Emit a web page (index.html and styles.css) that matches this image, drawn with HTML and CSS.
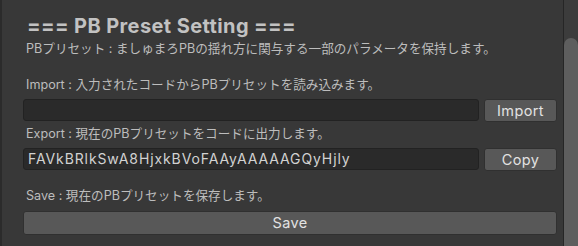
FILE: index.html
```html
<!DOCTYPE html>
<html lang="ja">
<head>
<meta charset="utf-8">
<link rel="stylesheet" href="styles.css">
</head>
<body>
<div class="window">
  <div class="edge"></div>
  <div class="content">
    <div class="title">=== PB Preset Setting ===</div>
    <div class="desc">PBプリセット : ましゅまろPBの揺れ方に関与する一部のパラメータを保持します。</div>
    <div class="label l-import">Import : 入力されたコードからPBプリセットを読み込みます。</div>
    <div class="row">
      <div class="field"></div>
      <div class="btn">Import</div>
    </div>
    <div class="label l-export">Export : 現在のPBプリセットをコードに出力します。</div>
    <div class="row">
      <div class="field code">FAVkBRlkSwA8HjxkBVoFAAyAAAAAGQyHjly</div>
      <div class="btn">Copy</div>
    </div>
    <div class="label l-save">Save : 現在のPBプリセットを保存します。</div>
    <div class="btn wide">Save</div>
  </div>
  <div class="scroll">
    <div class="thumb"></div>
  </div>
</div>
</body>
</html>
```
FILE: styles.css
```css
html, body {
  margin: 0;
  padding: 0;
  background: #383838;
  width: 578px;
  height: 246px;
  overflow: hidden;
}
.window {
  display: flex;
  height: 246px;
  font-family: Inter, "Noto Sans CJK JP", sans-serif;
  color: #c4c4c4;
}
.edge {
  width: 2px;
  background: #2b2b2b;
}
.content {
  flex: 1;
  padding: 0 6px 0 21px;
  display: flex;
  flex-direction: column;
}
.title {
  font-size: 20px;
  font-weight: 700;
  line-height: 24px;
  margin-top: 14px;
  padding-left: 4px;
  letter-spacing: 0.4px;
  color: #c2c2c2;
}
.desc {
  font-size: 12.6px;
  line-height: 16px;
  margin-top: 3px;
  padding-left: 3px;
  color: #bdbdbd;
}
.label {
  font-size: 12.6px;
  line-height: 16px;
  padding-left: 3px;
  color: #bdbdbd;
}
.l-import { margin-top: 20px; }
.l-export { margin-top: 4px; }
.l-save { margin-top: 17px; }
.row {
  display: flex;
  gap: 5px;
  margin-top: 5px;
  height: 24px;
  align-items: center;
}
.field {
  flex: 1;
  height: 22px;
  box-sizing: border-box;
  background: #2a2a2a;
  border: 1px solid #222;
  border-radius: 3px;
}
.code {
  font-size: 14px;
  line-height: 20px;
  padding-left: 4px;
  letter-spacing: 0.9px;
  color: #d2d2d2;
  white-space: nowrap;
  overflow: hidden;
}
.btn {
  width: 73px;
  height: 23px;
  box-sizing: border-box;
  background: #585858;
  border: 1px solid #303030;
  border-radius: 3px;
  color: #e2e2e2;
  font-size: 14.5px;
  line-height: 21px;
  text-align: center;
  letter-spacing: 0.4px;
}
.wide {
  width: auto;
  margin-top: 7px;
  height: 24px;
  line-height: 22px;
}
.scroll {
  width: 14px;
  border-left: 1px solid #262626;
  background: #3c3c3c;
  padding-top: 38px;
  display: flex;
}
.thumb {
  flex: 1;
  background: #5e5e5e;
  border-radius: 7px 7px 0 0;
}
```
